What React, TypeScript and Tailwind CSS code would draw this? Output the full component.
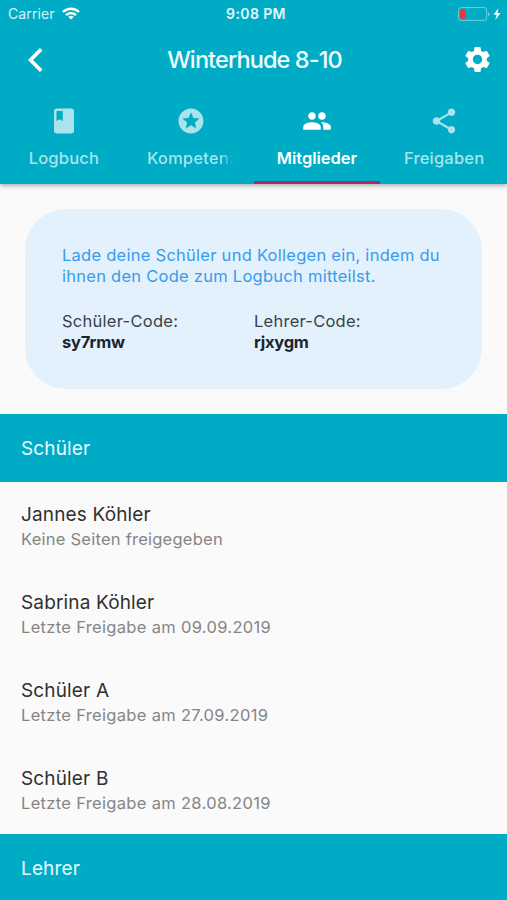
import type { ReactNode } from "react";

const students = [
  { name: "Jannes Köhler", note: "Keine Seiten freigegeben", dated: false },
  { name: "Sabrina Köhler", note: "Letzte Freigabe am 09.09.2019", dated: true },
  { name: "Schüler A", note: "Letzte Freigabe am 27.09.2019", dated: true },
  { name: "Schüler B", note: "Letzte Freigabe am 28.08.2019", dated: true },
];

const tabs = [
  {
    label: "Logbuch",
    path: "M18 2H6c-1.100 0-2 .9-2 2v16c0 1.100.9 2 2 2h12c1.100 0 2-.9 2-2V4c0-1.100-.9-2-2-2zM6 4h5v8l-2.500-1.500L6 12V4z",
  },
  {
    label: "Kompetenz",
    path: "M11.990 2C6.470 2 2 6.480 2 12s4.470 10 9.990 10C17.520 22 22 17.520 22 12S17.520 2 11.990 2zm4.240 16L12 15.450 7.770 18l1.120-4.810-3.730-3.230 4.920-.42L12 5l1.920 4.530 4.920.42-3.730 3.230L16.230 18z",
  },
  {
    label: "Mitglieder",
    path: "M16 11c1.660 0 2.990-1.340 2.990-3S17.660 5 16 5c-1.660 0-3 1.340-3 3s1.340 3 3 3zm-8 0c1.660 0 2.990-1.340 2.990-3S9.660 5 8 5C6.340 5 5 6.340 5 8s1.340 3 3 3zm0 2c-2.330 0-7 1.170-7 3.500V19h14v-2.500c0-2.330-4.670-3.500-7-3.500zm8 0c-.29 0-.62.02-.97.05 1.160.84 1.970 1.970 1.970 3.450V19h6v-2.500c0-2.330-4.670-3.500-7-3.500z",
  },
  {
    label: "Freigaben",
    path: "M18 16.080c-.76 0-1.440.3-1.960.77L8.910 12.700c.05-.23.09-.46.09-.7s-.04-.47-.09-.7l7.050-4.110c.54.5 1.250.81 2.040.81 1.660 0 3-1.340 3-3s-1.340-3-3-3-3 1.340-3 3c0 .24.04.47.09.7L8.040 9.810C7.500 9.310 6.790 9 6 9c-1.660 0-3 1.340-3 3s1.340 3 3 3c.79 0 1.500-.31 2.040-.81l7.120 4.160c-.05.21-.08.43-.08.65 0 1.610 1.310 2.920 2.920 2.920s2.920-1.310 2.920-2.920-1.310-2.920-2.920-2.920z",
  },
];

function SectionHeader({ children }: { children: ReactNode }) {
  return (
    <h2 className="flex h-[68px] shrink-0 items-center bg-[#00acc5] pt-[2px] pl-[21px] text-[19px] leading-6 tracking-[0.15px] text-[#e9fbfd]">
      {children}
    </h2>
  );
}

function StatusBar() {
  return (
    <div className="grid h-[27px] grid-cols-3 items-center text-[14px] leading-none">
      <div className="flex items-center gap-[7px] pl-2 text-[#d5f3f7]">
        <span className="tracking-[0.1px]">Carrier</span>
        <svg className="h-[13px] w-[18px]" viewBox="0 0 18 13" fill="none" stroke="white" strokeWidth="2.300">
          <path d="M1 5a11.500 11.500 0 0 1 16 0M4 8.200a7.300 7.300 0 0 1 10 0" />
          <path d="M9 12.600 6.300 10a4 4 0 0 1 5.400 0Z" fill="white" stroke="none" />
        </svg>
      </div>
      <span className="pl-[5px] text-center font-semibold tracking-[0.4px] text-[#e2f7fa]">9:08 PM</span>
      <div className="flex items-center justify-end pr-[6px]">
        <svg className="h-[14px] w-[43px]" viewBox="0 0 43 14">
          <rect x=".6" y=".6" width="28" height="12.800" rx="2.500" fill="none" stroke="#6ecfdd" strokeWidth="1" />
          <rect x="2" y="2.300" width="5.500" height="9.400" rx="1" fill="#e5393d" />
          <path d="M30 5v4.500q1.500-.6 1.500-2.200T30 5Z" fill="#6ecfdd" />
          <path d="m40.500 1-5 6.700h3l-1.200 5.300 5.200-7h-3.200Z" fill="white" />
        </svg>
      </div>
    </div>
  );
}

export default function App() {
  return (
    <main className="flex h-[900px] w-[507px] flex-col overflow-hidden bg-[#fafafa] font-['Inter','Noto_Sans',sans-serif]">
      <header className="relative z-10 h-[184px] shrink-0 bg-[#00acc5] text-white shadow-[0_1px_5px_rgba(0,0,0,0.4)]">
        <StatusBar />
        <div className="flex h-[65px] items-center justify-between pr-[14px] pl-[27px]">
          <svg className="h-6 w-[17px]" viewBox="0 0 17 24" fill="none" stroke="white" strokeWidth="3.600">
            <path d="M14.200 1.300 3.500 12l10.700 10.700" />
          </svg>
          <h1 className="pl-[3px] text-[23.500px] leading-8 font-medium tracking-[-0.9px] text-[#effcfd]">Winterhude 8-10</h1>
          <svg className="size-[31px]" viewBox="0 0 24 24" fill="white">
            <path d="M19.140 12.940c.04-.3.06-.61.06-.94 0-.32-.02-.64-.07-.94l2.030-1.580c.18-.14.23-.41.12-.61l-1.920-3.320c-.12-.22-.37-.29-.59-.22l-2.390.96c-.5-.38-1.030-.7-1.620-.94l-.36-2.540c-.04-.24-.24-.41-.48-.41h-3.840c-.24 0-.43.17-.47.41l-.36 2.540c-.59.24-1.130.57-1.620.94l-2.390-.96c-.22-.08-.47 0-.59.22L2.740 8.870c-.12.21-.08.47.12.61l2.030 1.580c-.05.3-.09.63-.09.94s.02.64.07.94l-2.030 1.580c-.18.14-.23.41-.12.61l1.920 3.320c.12.22.37.29.59.22l2.390-.96c.5.38 1.030.7 1.620.94l.36 2.540c.05.24.24.41.48.41h3.840c.24 0 .44-.17.47-.41l.36-2.540c.59-.24 1.130-.56 1.620-.94l2.390.96c.22.08.47 0 .59-.22l1.920-3.320c.12-.22.07-.47-.12-.61l-2.010-1.580zM12 15.600c-1.980 0-3.600-1.620-3.600-3.600s1.620-3.600 3.600-3.600 3.600 1.620 3.600 3.600-1.620 3.600-3.600 3.600z" />
          </svg>
        </div>
        <nav className="grid h-[92px] grid-cols-4">
          {tabs.map(({ label, path }) => {
            const active = label === "Mitglieder";
            const fades = label === "Kompetenz";
            return (
              <div
                key={label}
                className={`flex flex-col items-center border-b-3 pt-[14px] ${active ? "border-[#b32568] text-white" : "border-transparent pl-px text-[#a9e4ed]"}`}
              >
                <svg className="size-[30px]" viewBox="0 0 24 24" fill="currentColor">
                  <path d={path} />
                </svg>
                <span
                  className={`mt-[10px] text-[16.500px] leading-6 whitespace-nowrap ${active ? "font-semibold tracking-[-0.05px]" : "font-medium tracking-[0.2px]"} ${fades ? "w-[87px] [mask-image:linear-gradient(to_right,black_73px,transparent_86px)]" : ""}`}
                >
                  {label}
                </span>
              </div>
            );
          })}
        </nav>
      </header>

      <section className="mx-[25px] mt-[25px] mb-[25px] h-[180px] shrink-0 rounded-[41px] bg-[#e3f1fc] px-[37px] pt-9 text-[16.500px] leading-[21px]">
        <p className="tracking-[0.26px] whitespace-nowrap text-[#399bed]">
          Lade deine Schüler und Kollegen ein, indem du
          <br />
          ihnen den Code zum Logbuch mitteilst.
        </p>
        <div className="mt-6 grid grid-cols-[192px_1fr] text-[#37424a]">
          <div>
            <p className="tracking-[0.27px]">Schüler-Code:</p>
            <p className="font-bold tracking-[-0.15px] text-[#1b252c]">sy7rmw</p>
          </div>
          <div>
            <p className="tracking-[0.25px]">Lehrer-Code:</p>
            <p className="font-bold tracking-[-0.25px] text-[#1b252c]">rjxygm</p>
          </div>
        </div>
      </section>

      <SectionHeader>Schüler</SectionHeader>
      <ul className="shrink-0">
        {students.map(({ name, note, dated }) => (
          <li key={name} className="h-[88px] pt-[21px] pl-[21px]">
            <p className="text-[19px] leading-6 tracking-[0.15px] text-[#303030]">{name}</p>
            <p className={`mt-px text-[16.500px] leading-[22px] text-[#858585] ${dated ? "tracking-[0.32px]" : "tracking-[0.24px]"}`}>
              {note}
            </p>
          </li>
        ))}
      </ul>
      <SectionHeader>Lehrer</SectionHeader>
    </main>
  );
}
